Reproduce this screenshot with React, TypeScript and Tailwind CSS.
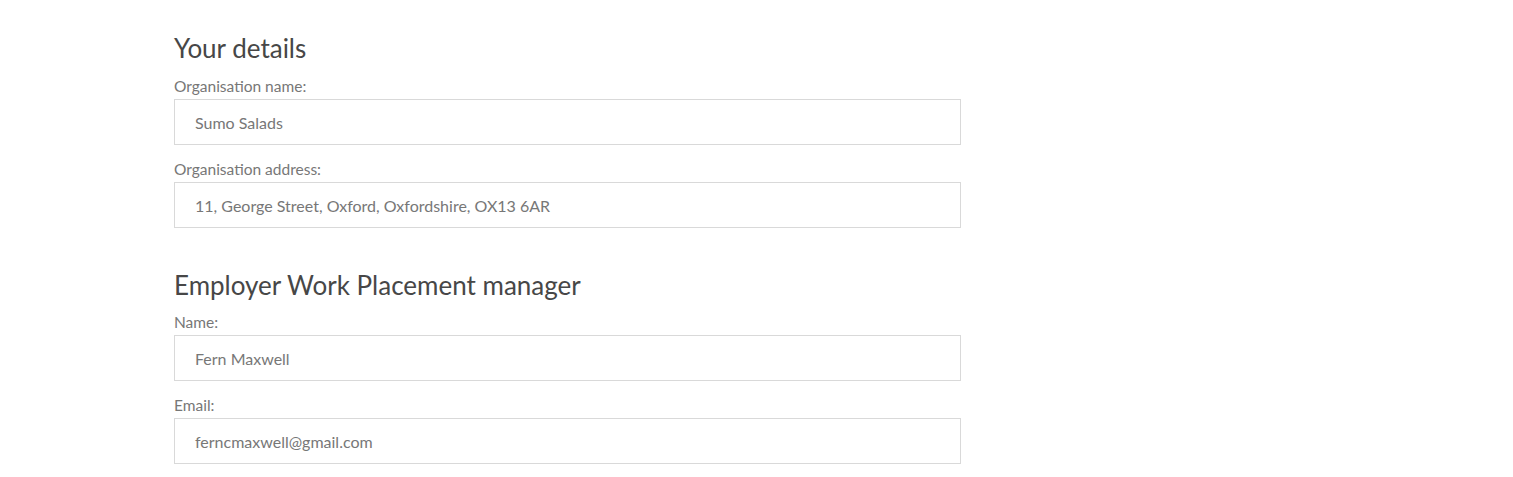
import React from "react";

const font = { fontFamily: "Lato, 'Open Sans', sans-serif" };

function Field({ label, value, className = "" }: { label: string; value: string; className?: string }) {
  return (
    <div className={className}>
      <div className="text-[15.5px] leading-[20px] text-[#777777] mb-[3px]">{label}</div>
      <div className="h-[46px] border border-[#d9d9d9] bg-white flex items-center pl-[20px] pt-[1px] text-[16px] text-[#777777]">
        {value}
      </div>
    </div>
  );
}

export default function App() {
  return (
    <div className="min-h-[477px] bg-white" style={font}>
      <div className="ml-[174px] w-[787px] pt-[33px]">
        <h2 className="text-[26px] leading-[30px] text-[#474747] font-normal">Your details</h2>
        <Field className="mt-[13px]" label="Organisation name:" value="Sumo Salads" />
        <Field className="mt-[14px]" label="Organisation address:" value="11, George Street, Oxford, Oxfordshire, OX13 6AR" />
        <h2 className="mt-[42px] text-[26px] leading-[30px] text-[#474747] font-normal">Employer Work Placement manager</h2>
        <Field className="mt-[12px]" label="Name:" value="Fern Maxwell" />
        <Field className="mt-[14px]" label="Email:" value="ferncmaxwell@gmail.com" />
      </div>
    </div>
  );
}
